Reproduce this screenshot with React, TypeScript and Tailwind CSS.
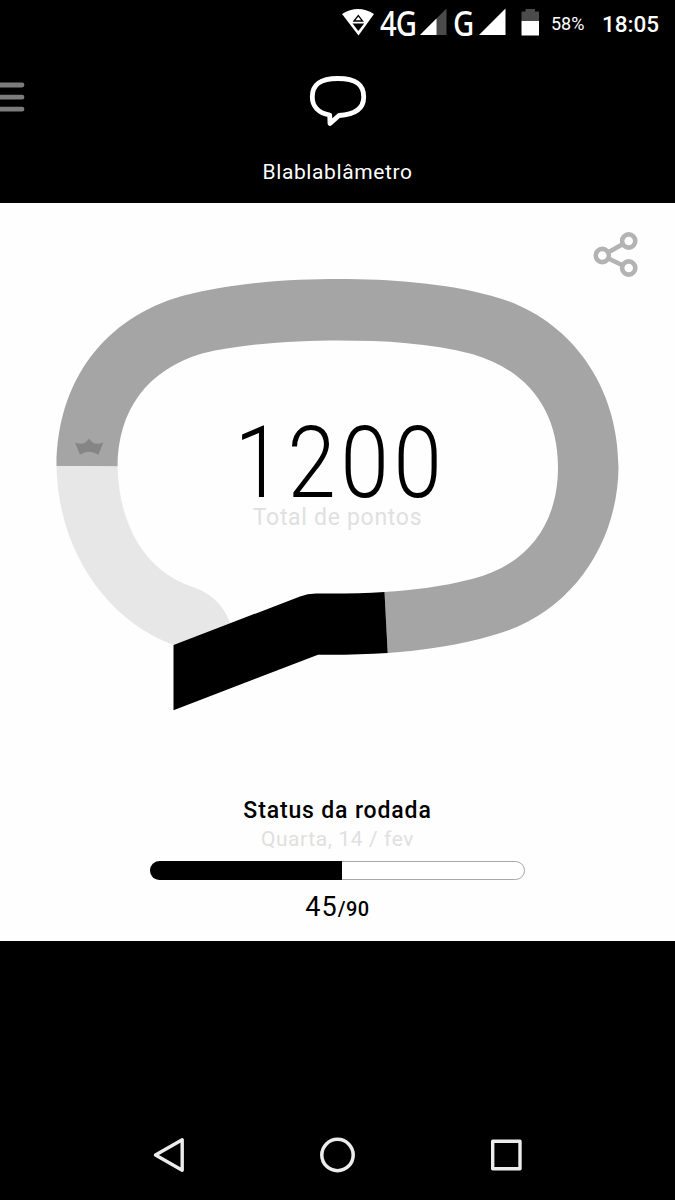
const font = "font-['Roboto',sans-serif]";

function StatusBar() {
  return (
    <div className="flex h-[46px] shrink-0 items-start text-white">
      <svg className="ml-[341px] mt-[8px] h-7 w-[34px] shrink-0" viewBox="341 8 34 28">
        <path d="M342 14Q358 4 374 14L358.500 35.500Z" fill="#fff" />
        <path d="M354 21L358.300 15.500L362.600 21Z" fill="none" stroke="#000" strokeWidth="1.300" />
        <path d="M352.500 23.500H364.200L358.300 31Z" fill="#000" />
      </svg>
      <div className="ml-[5px] mt-[5px] h-9 w-[37px] font-['Noto_Sans',sans-serif] text-[34px] font-medium leading-9">
        <span className="inline-block origin-left scale-x-[0.86] tracking-[-1px]">4G</span>
      </div>
      <svg className="ml-[3px] mt-[8px] h-7 w-[27px] shrink-0" viewBox="420 8 27 28">
        <path d="M420 35L446.500 8.500V35Z" fill="#4b4b4b" />
        <path d="M420 35L436.500 18.500V35Z" fill="#fff" />
      </svg>
      <div className="ml-[6px] mt-[5px] h-9 w-[24px] font-['Noto_Sans',sans-serif] text-[34px] font-medium leading-9">
        <span className="inline-block origin-left scale-x-[0.86]">G</span>
      </div>
      <svg className="ml-[2px] mt-[8px] h-7 w-[27px] shrink-0" viewBox="479 8 27 28">
        <path d="M479 35L505.500 8.500V35Z" fill="#fff" />
      </svg>
      <svg className="ml-[15px] mt-[8px] h-7 w-[19px] shrink-0" viewBox="521 8 19 28">
        <path d="M521.500 11.500H525.500V9H535V11.500H539V21H521.500Z" fill="#4b4b4b" />
        <path d="M521.500 21H539V35.500H521.500Z" fill="#fff" />
      </svg>
      <div className={`ml-[11px] mt-[12px] w-[40px] text-[18px] leading-6 ${font}`}>58%</div>
      <div className={`ml-[11px] mt-[12px] whitespace-nowrap text-[22.500px] font-medium leading-6 ${font}`}>18:05</div>
    </div>
  );
}

function Header() {
  return (
    <header className="grid h-[157px] shrink-0 grid-cols-[1fr_auto_1fr] items-start">
      <svg className="mt-[35px] h-8 w-[25px]" viewBox="0 81 25 32">
        <path d="M-3 85H22M-3 97.200H22M-3 109.200H22" stroke="#7c7c7c" strokeWidth="4.800" strokeLinecap="round" />
      </svg>
      <div className="flex flex-col items-center">
        <svg className="mt-[29px] h-[53px] w-[60px]" viewBox="307.500 75 60 53">
          <path
            d="M329.200 115C317.500 113 311.800 106 311.800 97C311.800 84.500 319.500 78.500 337.500 78.500S363.200 84.500 363.200 97C363.200 109 354.500 114.500 338.500 115.500L329.500 123.500Z"
            fill="none" stroke="#fff" strokeWidth="4.800" strokeLinejoin="round"
          />
        </svg>
        <h1 className={`mt-[30px] whitespace-nowrap text-[21px] leading-7 tracking-[0.600px] text-white ${font}`}>
          Blablablâmetro
        </h1>
      </div>
    </header>
  );
}

function Gauge() {
  return (
    <div className="mx-auto mt-[2px] grid h-[434px] w-[563px] shrink-0">
      <svg className="[grid-area:1/1] h-[434px] w-[563px]" viewBox="56 278 563 434">
        <path
          d="M56.500 466C57 380 105 318 182 296C240 281 300 279 338 279C390 279 445 283 492 296C565 315 618 380 618.500 467C618 545 569 616 492 635.500C460 645 420 651 387.700 653L384.500 592C415 590 440 587 472 579C525 566 558 527 558 467C558 411 528 370 472 354C430 343 385 340.500 338 340.500C300 340.500 245 343 202 353.500C147 370 118 410 117.500 466.500Z"
          fill="#a5a5a5"
        />
        <path
          d="M56.500 466L117.500 466.500C119 525 145 570 190 586C212 593 224 606 230 623L173.500 645C106 620 58 550 56.500 466Z"
          fill="#e7e7e7"
        />
        <path
          d="M173.500 645L300 596.500Q307.500 593.500 316 593.500C340 593.700 364 593.500 384.500 592L387.700 653C364 654.500 341 655 318 654.700L173.500 710.300Z"
          fill="#000"
        />
        <path
          d="M75 442.500Q81 445 85.500 442.500L89 438.800L92.500 442.500Q97 445 103.300 442.500L98.400 454.700Q89 449 80 454.700Z"
          fill="#858585"
        />
      </svg>
      <div className={`[grid-area:1/1] flex flex-col items-center text-center ${font}`}>
        <div className="mt-[147px] h-[76px] origin-center scale-x-[0.87] whitespace-nowrap pl-[6px] text-[100px] font-light leading-[76px] tracking-[5.500px] text-black">
          1200
        </div>
        <div className="mt-[3px] whitespace-nowrap text-[23px] leading-7 tracking-[0.700px] text-[#e0e0e0]">
          Total de pontos
        </div>
      </div>
    </div>
  );
}

function RoundStatus() {
  const done = 45;
  const total = 90;
  return (
    <section className={`mt-[85px] flex flex-col items-center ${font}`}>
      <h2 className="whitespace-nowrap text-[23px] font-medium leading-7 tracking-[0.850px] text-black">Status da rodada</h2>
      <div className="whitespace-nowrap text-[21px] leading-7 tracking-[0.600px] text-[#e0e0e0]">Quarta, 14 / fev</div>
      <div className="mt-[8px] flex h-[19px] w-[375px] rounded-full border border-[#a8a8a8] bg-white">
        <div className="-my-px -ml-px h-[19px] w-[192px] rounded-l-full bg-black" />
      </div>
      <div className="mt-[11px] flex items-baseline whitespace-nowrap leading-8 text-black">
        <span className="text-[27px] tracking-[1px]">{done}</span>
        <span className="text-[20px] font-medium tracking-[0.500px]">/{total}</span>
      </div>
    </section>
  );
}

function NavBar() {
  return (
    <nav className="mt-auto flex h-[90px] shrink-0 items-center justify-center gap-[133px]">
      <svg className="h-9 w-9" viewBox="151 1137 36 36">
        <path d="M155.500 1155L182.200 1139.800V1170.300Z" fill="none" stroke="#ececec" strokeWidth="3.400" strokeLinejoin="round" />
      </svg>
      <svg className="h-9 w-9" viewBox="320 1137 36 36">
        <circle cx="337.500" cy="1155" r="15.700" fill="none" stroke="#ececec" strokeWidth="3.500" />
      </svg>
      <svg className="h-9 w-9" viewBox="489 1137 36 36">
        <rect x="492.700" y="1141.200" width="27.300" height="27.600" fill="none" stroke="#ececec" strokeWidth="3.400" strokeLinejoin="round" />
      </svg>
    </nav>
  );
}

export default function App() {
  return (
    <div className="flex h-[1200px] w-[675px] flex-col overflow-hidden bg-black">
      <StatusBar />
      <Header />
      <main className="flex h-[738px] shrink-0 flex-col bg-[#fefefe]">
        <div className="flex h-[73px] shrink-0 justify-end pr-[37px] pt-[28px]">
          <svg className="h-[46px] w-[46px]" viewBox="592 231 46 46">
            <g fill="none" stroke="#b3b3b3" strokeWidth="4.600">
              <path d="M608 252.500L623 244M608 258.300L623 265.500" />
              <circle cx="602.300" cy="255.500" r="6.600" />
              <circle cx="628.700" cy="241" r="6.600" />
              <circle cx="628.700" cy="268" r="6.600" />
            </g>
          </svg>
        </div>
        <Gauge />
        <RoundStatus />
      </main>
      <NavBar />
    </div>
  );
}
